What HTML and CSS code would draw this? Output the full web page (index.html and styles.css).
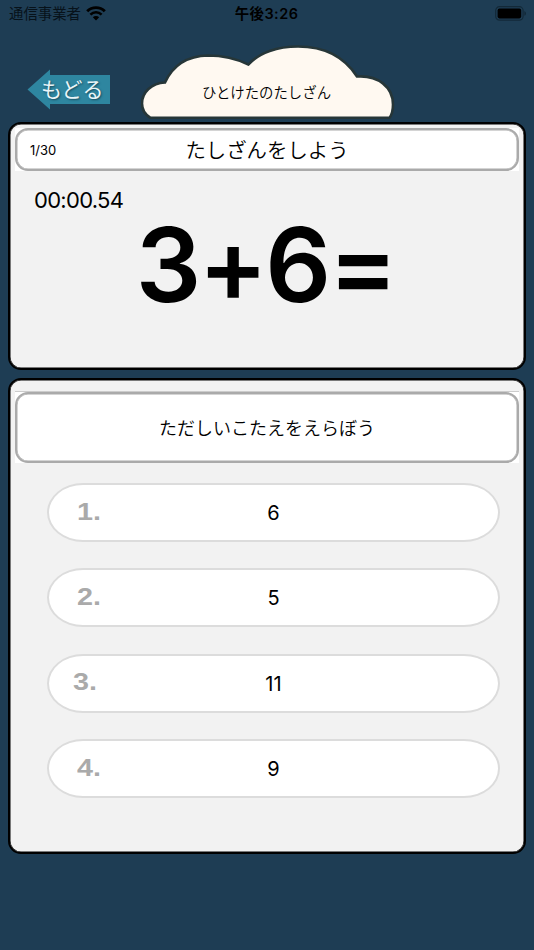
FILE: index.html
```html
<!DOCTYPE html>
<html lang="ja">
<head>
    <meta charset="UTF-8">
    <meta name="viewport" content="width=device-width, initial-scale=1.0">
    <title>ひとけたのたしざん</title>
    <link rel="stylesheet" href="styles.css">
</head>
<body>

    <div class="status-bar">
        <div class="carrier">
            <span>通信事業者</span>
            <svg class="wifi" width="20" height="15" viewBox="0 0 20 15">
                <path d="M1.2 5.3 A12.4 12.4 0 0 1 18.8 5.3" fill="none" stroke="#000" stroke-width="2.9"/>
                <path d="M4.4 8.7 A7.9 7.9 0 0 1 15.6 8.7" fill="none" stroke="#000" stroke-width="2.5"/>
                <path d="M6.8 11.2 A4.6 4.6 0 0 1 13.2 11.2 L10 14.4 Z"/>
            </svg>
        </div>
        <div class="time">午後3:26</div>
        <svg class="battery" width="32" height="15" viewBox="0 0 32 15">
            <rect x="0.7" y="0.7" width="27.4" height="13.4" rx="3.8" fill="none" stroke="#132938" stroke-width="1.2"/>
            <rect x="2.6" y="2.6" width="23.6" height="9.8" rx="1.8"/>
            <path d="M29.4 5 Q31 5.6 31 7.4 Q31 9.2 29.4 9.8 Z" fill="#132938"/>
        </svg>
    </div>

    <div class="top">
        <a class="back" href="#">
            <svg width="84" height="42" viewBox="0 0 84 42">
                <path d="M0.5 20.5 L23 0.5 V6 H83 V35 H23 V40.5 Z" fill="#2e86a0"/>
            </svg>
            <span>もどる</span>
        </a>
        <div class="cloud">
            <svg width="254" height="76" viewBox="0 0 254 76">
                <path d="M9.5 72.8 C4 69.5 1 64.5 1 58.5 C1 47.5 10.5 38 24 37.5 C32 20 46 11 67 10.5 C83 10.5 95 13.5 107.5 19.5 C118 7.5 137 1.5 157 1.5 C186 1.5 205 14.5 216 31.5 C237 30 252 42 252 59.5 C252 65.5 251 69.5 248.5 72.8 Z" fill="#fff9f1" stroke="#263638" stroke-width="2.6"/>
            </svg>
            <h1>ひとけたのたしざん</h1>
        </div>
    </div>

    <div class="panel question">
        <div class="header">
            <div class="header-box">
                <span class="count">1/30</span>
                <span class="title">たしざんをしよう</span>
            </div>
        </div>
        <div class="timer">00:00.54</div>
        <div class="formula">3+6=</div>
    </div>

    <div class="panel answers">
        <div class="header tall">
            <div class="header-box">
                <span class="guide">ただしいこたえをえらぼう</span>
            </div>
        </div>
        <div class="choices">
            <button class="choice"><span class="num">1.</span>6</button>
            <button class="choice"><span class="num">2.</span>5</button>
            <button class="choice third"><span class="num">3.</span>11</button>
            <button class="choice"><span class="num">4.</span>9</button>
        </div>
    </div>

</body>
</html>
```
FILE: styles.css
```css
* {
    box-sizing: border-box;
}
body {
    margin: 0;
    height: 950px;
    overflow: hidden;
    background: #1e3d54;
    color: #000;
    font-family: Inter, "Noto Sans CJK JP", sans-serif;
}
.status-bar {
    display: grid;
    grid-template-columns: 1fr auto 1fr;
    align-items: center;
    height: 28px;
    padding: 0 7px 0 9px;
}
.carrier {
    display: flex;
    align-items: center;
    gap: 5px;
    font-size: 14.4px;
    line-height: 28px;
    color: #07121a;
}
.wifi {
    margin-top: -2px;
}
.time {
    margin-left: -3px;
    font-size: 14.4px;
    font-weight: 600;
    line-height: 28px;
    letter-spacing: 0.5px;
}
.battery {
    justify-self: end;
    margin-top: -1px;
}

.top {
    display: flex;
    height: 94px;
}
.back {
    position: relative;
    width: 84px;
    height: 42px;
    margin: 41px 0 0 27px;
    text-decoration: none;
}
.back span {
    position: absolute;
    left: 14px;
    top: 0;
    font-size: 21px;
    line-height: 41px;
    color: #e8f5f8;
    text-shadow: 1px 1px 2px #164a5c;
    white-space: nowrap;
}
.cloud {
    position: relative;
    width: 254px;
    height: 76px;
    margin: 17px 0 0 30px;
}
.cloud h1 {
    position: absolute;
    left: 0;
    top: 38px;
    width: 251px;
    margin: 0;
    font-size: 14.4px;
    font-weight: 350;
    line-height: 20px;
    text-align: center;
}

.panel {
    margin: 0 8px;
    border: 2px solid #000;
    border-radius: 13px;
    background: #f2f2f2;
    box-shadow: inset 0 0 0 0.5px #000;
}
.question {
    height: 248px;
    padding: 4px 5px 0;
}
.answers {
    height: 476px;
    margin-top: 8px;
    padding: 11px 5px 0;
}
.header {
    height: 43px;
    background: #fff;
}
.header-box {
    position: relative;
    display: flex;
    align-items: center;
    justify-content: center;
    height: 100%;
    border: 2px solid #aaa;
    border-radius: 13px;
    box-shadow: inset 0 0 0 0.5px #aaa;
}
.tall {
    height: 72px;
    border-top: 1px solid #ccc;
}
.count {
    position: absolute;
    left: 13px;
    font-size: 13px;
}
.title {
    padding-top: 2px;
    font-size: 20.4px;
    font-weight: 350;
    line-height: 36px;
}
.guide {
    padding-bottom: 2px;
    font-size: 18px;
    font-weight: 350;
}
.timer {
    margin: 15px 0 0 19px;
    font-size: 22px;
    line-height: 28px;
    letter-spacing: -0.7px;
}
.formula {
    height: 100px;
    padding-right: 3px;
    font-size: 103px;
    font-weight: 600;
    font-feature-settings: "calt" 0;
    line-height: 101px;
    letter-spacing: -2.6px;
    text-align: center;
}

.choices {
    display: grid;
    gap: 26.4px;
    margin: 20px 19px 0 32px;
}
.choice {
    position: relative;
    height: 59px;
    padding: 1px 0 0;
    border: 2px solid #dcdcdc;
    border-radius: 36px / 29.5px;
    background: #fff;
    color: #000;
    font-family: inherit;
    font-size: 20px;
}
.num {
    position: absolute;
    left: 28px;
    top: 14px;
    font-family: "Liberation Sans", sans-serif;
    font-size: 23px;
    font-weight: bold;
    line-height: 26px;
    color: #aaa;
    transform: scaleX(1.25);
    transform-origin: left;
}
.third .num {
    left: 24px;
    top: 13px;
}
```
